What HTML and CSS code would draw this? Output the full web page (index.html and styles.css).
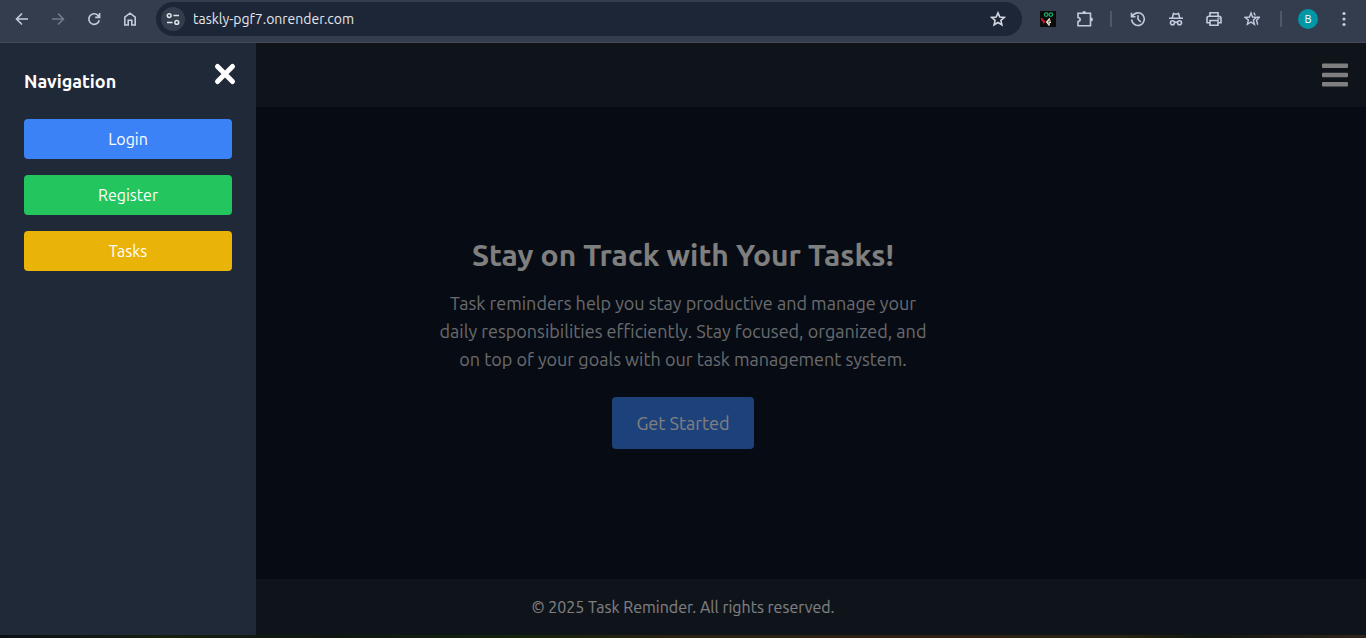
FILE: index.html
```
<!DOCTYPE html>
<html lang="en">
<head>
<meta charset="utf-8">
<meta name="viewport" content="width=device-width, initial-scale=1">
<title>Task Reminder</title>
<link rel="stylesheet" href="styles.css">
</head>
<body>
<div class="browser">
  <div class="nav-buttons">
    <button class="tool" aria-label="Back"><svg viewBox="0 0 16 16"><path d="M14 8H3M8 2.5 2.5 8 8 13.5"/></svg></button>
    <button class="tool tool-off" aria-label="Forward"><svg viewBox="0 0 16 16"><path d="M2 8h11M8 2.5 13.5 8 8 13.5"/></svg></button>
    <button class="tool" aria-label="Reload"><svg viewBox="0 0 16 16"><path d="M13.3 9.2A5.3 5.3 0 1 1 12 4.4L13.4 6M13.6 2v4.4H9.2"/></svg></button>
    <button class="tool" aria-label="Home"><svg viewBox="0 0 16 16"><path d="M2.8 14V6.2L8 2.2l5.2 4V14H9.8V9.2H6.2V14z"/></svg></button>
  </div>
  <div class="address">
    <button class="site-info" aria-label="Site information"><svg viewBox="0 0 16 16"><circle cx="4.2" cy="4.6" r="1.9"/><circle cx="11.8" cy="11.4" r="1.9"/><path d="M8.4 4.6H14M2 11.4h5.6"/></svg></button>
    <input class="url" type="text" aria-label="Address" value="taskly-pgf7.onrender.com">
    <button class="tool bookmark" aria-label="Bookmark"><svg viewBox="0 0 16 16"><path d="m8 1.9 1.8 4.1 4.5.4-3.4 3 1 4.400L8 11.500l-3.900 2.300 1-4.400-3.400-3L6.200 6z"/></svg></button>
  </div>
  <div class="extensions">
    <button class="tool" aria-label="Practice extension"><svg viewBox="0 0 16 16"><path fill="#0b0c0e" stroke="none" d="M0 0h16v16H0z"/><g stroke-width="1.2"><circle stroke="#18b26c" cx="6.200" cy="3.600" r="1.800"/><circle stroke="#18b26c" cx="10.800" cy="3.600" r="1.800"/><path stroke="#e01b24" stroke-width="1.500" d="M1.800 7Q1.500 10 5 10.500M3 12l2-1.500"/><path stroke="#e8e8e8" stroke-width="1.500" d="M9.800 7.500 6.800 11l2.700 3.500M8.500 11.200h2.500"/><path stroke="#f5a623" d="M9 9l1.500.8M8.500 13.200l1.500-.8"/></g></svg></button>
    <button class="tool" aria-label="Extensions"><svg class="wide" viewBox="0 0 18 18"><path d="M2 3.300h12.500v12.400H2v-4.200q2.200-.3 2.200-2T2 7.500z"/><path fill="currentColor" stroke="none" d="M6.300 3.200a1.900 2.200 0 0 1 3.800 0zM14.800 7.600a2.200 1.900 0 0 1 0 3.800z"/></svg></button>
  </div>
  <span class="divider"></span>
  <div class="shortcuts">
    <button class="tool" aria-label="History"><svg viewBox="0 0 16 16"><path d="M2.400 5.200A6.300 6.300 0 1 1 1.700 8.500M1.500 1.800v3.900h4M8 4.200v4l2.800 2.800"/></svg></button>
    <button class="tool" aria-label="Incognito"><svg viewBox="0 0 16 16"><path d="M1 7.200h14M4.200 7l1.300-4.500 2.500.7 2.500-.7L11.800 7M6.500 11.500q1.500-1 3 0"/><circle cx="4.500" cy="11.700" r="2"/><circle cx="11.500" cy="11.700" r="2"/></svg></button>
    <button class="tool" aria-label="Print"><svg viewBox="0 0 16 16"><path d="M4 5.200V1.800h8v3.400M4 11.800H1V7.200q0-2 2-2h10q2 0 2 2v4.600h-3M4 9.500h8v4.800H4z"/><circle cx="12.500" cy="7.500" r=".4"/></svg></button>
    <button class="tool" aria-label="All bookmarks"><svg viewBox="0 0 16 16"><path stroke-width="1.400" d="m7 2 1.500 4 4 .3-3.100 2.700 1 4.300L7 11l-3.600 2.300 1-4.300L1 6.300 5.500 6zM9.800 1.500l1.500 3M13 6.300h2.500l-3 3 1.200 4.500"/></svg></button>
  </div>
  <span class="divider"></span>
  <button class="avatar" aria-label="Profile">B</button>
  <button class="tool" aria-label="Menu"><svg viewBox="0 0 16 16"><g fill="currentColor" stroke="none"><circle cx="8" cy="2.500" r="1.600"/><circle cx="8" cy="8" r="1.600"/><circle cx="8" cy="13.500" r="1.600"/></g></svg></button>
</div>

<div class="app">
  <header class="topbar">
    <button class="menu" aria-label="Open navigation"><svg viewBox="0 0 28 24"><path d="M2 .5h24q1 0 1 1v2.500q0 1-1 1H2q-1 0-1-1V1.500q0-1 1-1M2 9.700h24q1 0 1 1v2.500q0 1-1 1H2q-1 0-1-1v-2.500q0-1 1-1M2 19h24q1 0 1 1v2.500q0 1-1 1H2q-1 0-1-1V20q0-1 1-1"/></svg></button>
  </header>
  <main class="hero">
    <h1 class="title">Stay on Track with Your Tasks!</h1>
    <p class="lead">Task reminders help you stay productive and manage your daily responsibilities efficiently. Stay focused, organized, and on top of your goals with our task management system.</p>
    <a class="start" href="#login">Get Started</a>
  </main>
  <footer class="footer">© 2025 Task Reminder. All rights reserved.</footer>
  <div class="backdrop"></div>
  <aside class="drawer">
    <button class="close" aria-label="Close navigation"><svg viewBox="0 0 24 24"><path d="m4.500 4.500 15 15m0-15-15 15"/></svg></button>
    <h2 class="drawer-title">Navigation</h2>
    <nav class="links">
      <a class="link link-login" href="#login">Login</a>
      <a class="link link-register" href="#register">Register</a>
      <a class="link link-tasks" href="#tasks">Tasks</a>
    </nav>
  </aside>
</div>
<div class="desktop"></div>
</body>
</html>
```
FILE: styles.css
```
* { box-sizing: border-box; }

body {
  margin: 0;
  height: 100vh;
  display: flex;
  flex-direction: column;
  overflow: hidden;
  font-family: Ubuntu, "Noto Sans", sans-serif;
  font-size: 16px;
  line-height: 24px;
  color: #fff;
}

button {
  padding: 0;
  border: 0;
  background: none;
  color: inherit;
  font: inherit;
}

a { color: inherit; text-decoration: none; }
svg { display: block; }

/* Browser toolbar */
.browser {
  display: flex;
  align-items: center;
  flex: none;
  height: 43px;
  padding: 0 14px 4px;
  background: #343d4e;
  border-bottom: 1px solid #484b50;
  color: #c3cbe0;
}

.nav-buttons { display: flex; gap: 20px; margin-right: 18px; }

.tool svg {
  width: 16px;
  height: 16px;
  fill: none;
  stroke: currentColor;
  stroke-width: 1.6;
}

.tool .wide { width: 18px; height: 18px; }
.tool-off { color: #737b8b; }

.address {
  display: flex;
  align-items: center;
  flex: 1;
  gap: 8px;
  height: 34px;
  padding: 0 16px 0 5px;
  border-radius: 17px;
  background: #1d2637;
}

.site-info {
  display: grid;
  place-items: center;
  width: 24px;
  height: 24px;
  border-radius: 50%;
  background: #343d4e;
  color: #dfe3ea;
}

.site-info svg {
  width: 16px;
  height: 16px;
  fill: none;
  stroke: currentColor;
  stroke-width: 1.5;
}

.url {
  flex: 1;
  min-width: 0;
  padding: 0;
  border: 0;
  outline: 0;
  background: none;
  color: #e3e6ec;
  font: 14px/20px Ubuntu, "Noto Sans", sans-serif;
}

.bookmark { color: #d3d7df; }
.extensions { display: flex; align-items: center; gap: 20px; margin: 0 16px 0 18px; }
.divider { width: 2px; height: 16px; background: #505869; }
.shortcuts { display: flex; gap: 22px; margin: 0 20px 0 18px; }

.avatar {
  width: 20px;
  height: 20px;
  margin: 0 18px 0 16px;
  border-radius: 50%;
  background: #0097a7;
  color: #fff;
  font-size: 11px;
  line-height: 20px;
}

/* Page */
.app {
  position: relative;
  display: flex;
  flex-direction: column;
  flex: 1;
  background: #0e1726;
}

.topbar {
  display: flex;
  align-items: center;
  justify-content: flex-end;
  height: 64px;
  padding: 0 17px;
  background: #1f2937;
}

.menu svg { width: 28px; height: 24px; fill: #fff; }

.hero {
  display: flex;
  flex-direction: column;
  align-items: center;
  justify-content: center;
  flex: 1;
  text-align: center;
}

.title {
  margin: 0 0 16px;
  font-size: 30px;
  line-height: 36px;
  font-weight: 700;
}

.lead {
  max-width: 500px;
  margin: 0 0 24px;
  color: #d1d5db;
  font-size: 18px;
  line-height: 28px;
}

.start {
  padding: 12px 24px;
  border-radius: 4px;
  background: #3b82f6;
  font-size: 18px;
  line-height: 28px;
}

.footer {
  padding: 16px;
  background: #1f2937;
  text-align: center;
}

.backdrop {
  position: absolute;
  inset: 0;
  background: rgba(0, 0, 0, 0.5);
}

.drawer {
  position: absolute;
  inset: 0 auto 0 0;
  width: 256px;
  padding: 24px;
  background: #1f2937;
}

.close { position: absolute; top: 19px; right: 19px; }

.close svg {
  width: 24px;
  height: 24px;
  stroke: #fff;
  stroke-width: 5;
  stroke-linecap: round;
}

.drawer-title {
  margin: 0 0 24px;
  font-size: 18px;
  line-height: 28px;
  font-weight: 700;
}

.links { display: grid; gap: 16px; }

.link {
  padding: 8px 16px;
  border-radius: 4px;
  text-align: center;
}

.link-login { background: #3b82f6; }
.link-register { background: #22c55e; }
.link-tasks { background: #eab308; }

/* Sliver of wallpaper below the window */
.desktop {
  flex: none;
  height: 3px;
  background: linear-gradient(90deg, #0b1016, #16200f 12%, #0f1710 24%, #15230d 38%, #2b2112 50%, #30200f 70%, #292410 82%, #11170f 88%, #30241a);
}
```
